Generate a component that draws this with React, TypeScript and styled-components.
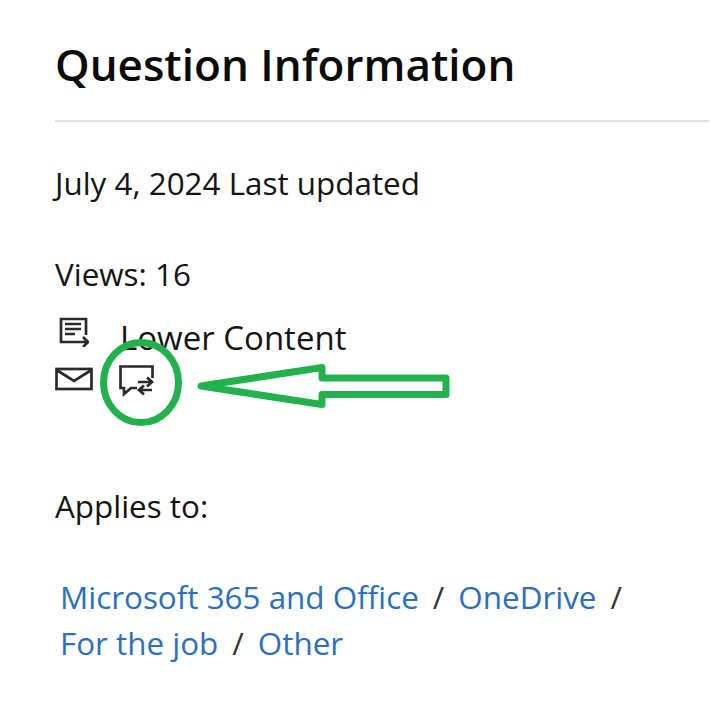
import React from "react";
import styled, { createGlobalStyle } from "styled-components";

const Global = createGlobalStyle`
  html, body { margin: 0; padding: 0; background: #fff; }
  body { font-family: "Open Sans", "Noto Sans", "Liberation Sans", sans-serif; color: #141414; }
`;

const Page = styled.main`
  position: relative;
  width: 714px;
  height: 727px;
  overflow: hidden;
  box-sizing: border-box;
  padding: 34px 5px 0 55px;
`;

const Title = styled.h1`
  margin: 0;
  font-size: 44px;
  line-height: 60px;
  font-weight: 600;
  color: #0b0b0b;
`;

const Divider = styled.hr`
  margin: 26px 0 0;
  border: 0;
  height: 2px;
  background: #e1e1e1;
`;

const Line = styled.p<{ $top: number }>`
  margin: ${(p) => p.$top}px 0 0;
  font-size: 31.4px;
  line-height: 44px;
`;

const ActionRow = styled.div`
  display: flex;
  align-items: flex-start;
  height: 44px;
  margin-top: 20px;
`;

const ReportSlot = styled.span`
  width: 65px;
  padding: 1px 0 0 4px;
  box-sizing: border-box;
  display: flex;
`;

const ActionText = styled.span`
  font-size: 33px;
  line-height: 44px;
`;

const IconRow = styled.div`
  display: flex;
  align-items: flex-start;
  gap: 26px;
  height: 36px;
  padding-top: 5px;
  box-sizing: border-box;
`;

const Crumbs = styled.nav`
  margin: 46px 0 0 5px;
  font-size: 31.4px;
  line-height: 46px;
  width: 620px;
`;

const Crumb = styled.a`
  color: #2b6fbe;
  text-decoration: none;
`;

const Sep = styled.span`
  color: #333;
  margin: 0 14px;
`;

const Annotation = styled.svg`
  position: absolute;
  left: 0;
  top: 0;
  pointer-events: none;
`;

const ReportIcon = () => (
  <svg width="30" height="30" viewBox="0 0 30 30" fill="none" stroke="#2a2a2a" strokeWidth="2.700">
    <path d="M27 18V2H2v23h14" />
    <path d="M6 7h16M6 12h16M6 17h10" />
    <path d="M16 25h12M24 20l5 5-5 5" />
  </svg>
);

const MailIcon = () => (
  <svg width="38" height="26" viewBox="0 0 38 26" fill="none" stroke="#2a2a2a" strokeWidth="2.700">
    <rect x="1.500" y="4" width="35" height="20" />
    <path d="M1.500 5L19 16 36.500 5" />
  </svg>
);

const ChatIcon = () => (
  <svg width="36" height="32" viewBox="0 0 36 32" fill="none" stroke="#2a2a2a" strokeWidth="2.700">
    <path d="M33.500 13V1.500H1.500V23H5v6l7-6h6" />
    <path d="M19 17h14M28 12.500l5 4.500-5 4.500" />
    <path d="M33 25H20M25 20.500L20 25l5 4.500" />
  </svg>
);

export default function App() {
  return (
    <>
      <Global />
      <Page>
        <Title>Question Information</Title>
        <Divider />
        <Line $top={39}>July 4, 2024 Last updated</Line>
        <Line $top={47}>Views: 16</Line>
        <ActionRow>
          <ReportSlot><ReportIcon /></ReportSlot>
          <ActionText>Lower Content</ActionText>
        </ActionRow>
        <IconRow>
          <MailIcon />
          <ChatIcon />
        </IconRow>
        <Line $top={88}>Applies to:</Line>
        <Crumbs>
          <Crumb href="#">Microsoft 365 and Office</Crumb>
          <Sep>/</Sep>
          <Crumb href="#">OneDrive</Crumb>
          <Sep>/</Sep>
          <br />
          <Crumb href="#">For the job</Crumb>
          <Sep>/</Sep>
          <Crumb href="#">Other</Crumb>
        </Crumbs>
        <Annotation width="714" height="727" viewBox="0 0 714 727" fill="none" stroke="#22b14c" strokeWidth="7">
          <ellipse cx="141" cy="382.500" rx="37.500" ry="40" />
          <path d="M201 386L322 367.500V378H446V394.500H322V404.500Z" strokeLinejoin="round" />
        </Annotation>
      </Page>
    </>
  );
}
